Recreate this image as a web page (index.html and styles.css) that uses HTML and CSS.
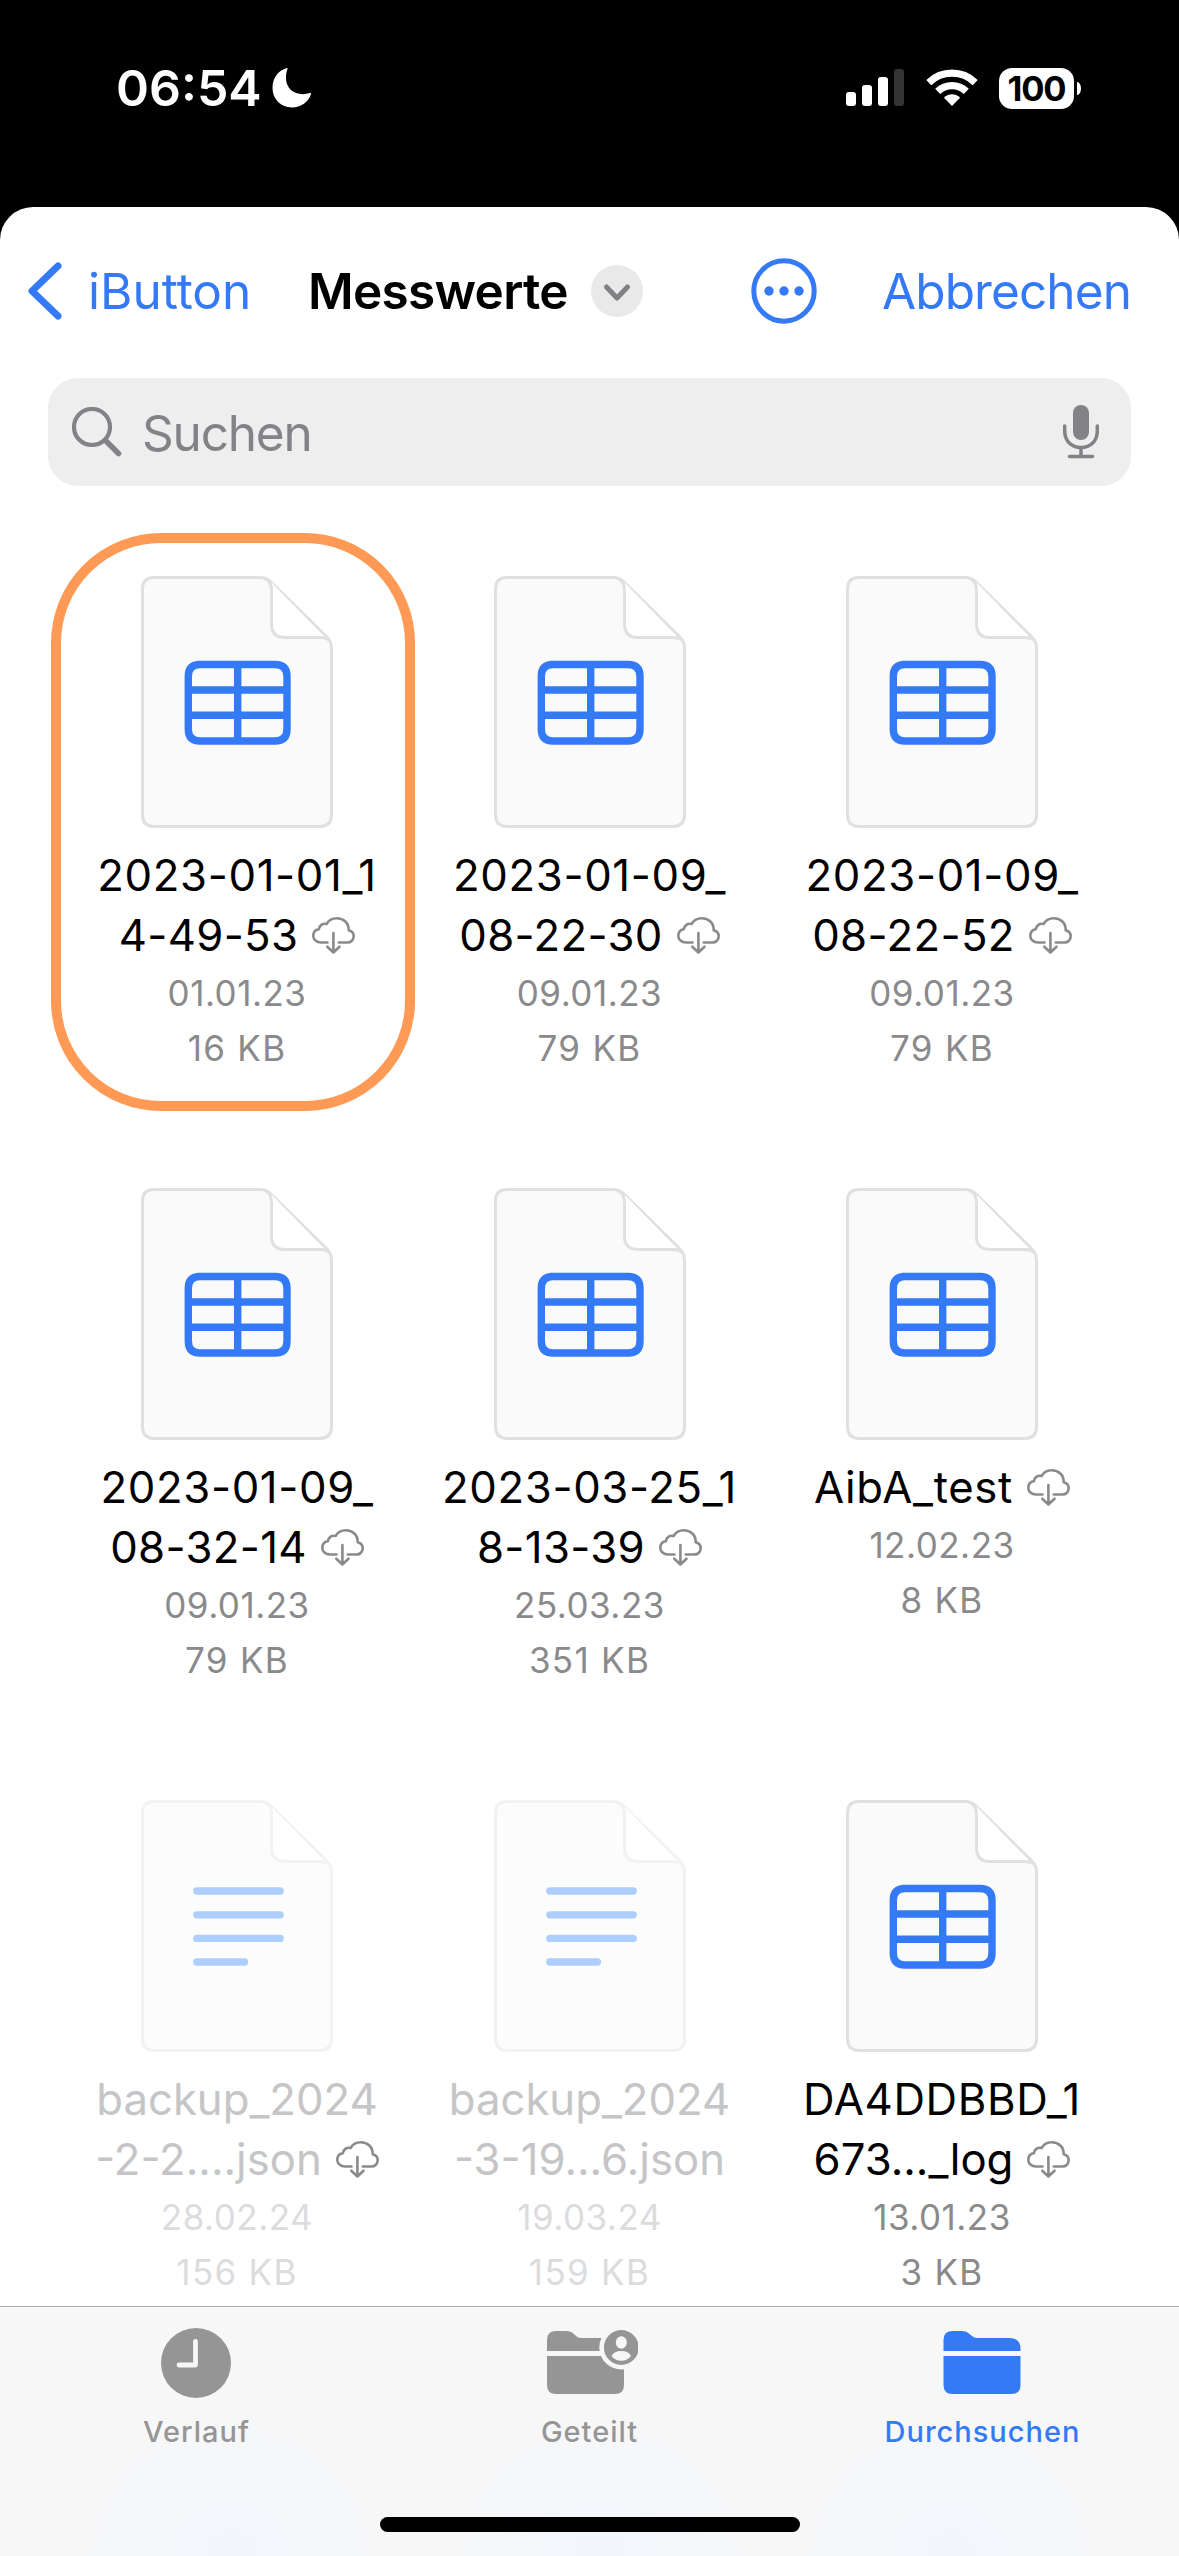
FILE: index.html
```html
<!DOCTYPE html>
<html lang="de">
<head>
<meta charset="utf-8">
<title>Messwerte</title>
<link rel="stylesheet" href="styles.css">
</head>
<body>
<svg class="sprite" aria-hidden="true">
  <symbol id="page" viewBox="0 0 192 252">
    <path class="page-body" d="M13 1.5H119Q125.500 1.500 130.500 6.500L185.500 60.500Q190.500 65 190.500 72V238.500Q190.500 250.500 179 250.500H13Q1.500 250.500 1.500 238.500V13Q1.500 1.500 13 1.500Z"/>
    <path class="page-fold" d="M130.500 6.500V48Q130.500 61.500 144 61.500H184Z"/>
    <path class="page-edge" d="M125 3Q130.500 6.500 130.500 14V48Q130.500 61.500 144 61.500H179Q186 61.500 188.500 65"/>
  </symbol>
  <symbol id="table" viewBox="0 0 192 252">
    <use href="#page"/>
    <path class="table-lines" d="M57 88.500H134Q146 88.500 146 100.500V153Q146 165 134 165H59Q47.300 165 47.300 153V100.500Q47.300 88.500 59 88.500ZM96.700 88.500V165M47.300 114H146M47.300 139.300H146"/>
  </symbol>
  <symbol id="text" viewBox="0 0 192 252">
    <use href="#page"/>
    <path class="text-lines" d="M55.800 91H139.200M55.800 114.800H139.200M55.800 138.400H139.200M55.800 162H103.500"/>
  </symbol>
  <symbol id="cloud" viewBox="0 0 43 38">
    <path d="M15.500 25.500H9C4.500 25.500 1.300 22.500 1.300 18.900C1.300 15.400 3.300 12.800 6.800 12.300C7.300 8.500 10.500 6 14.600 7C17 3 20.500 1.300 24.800 1.300C31.500 1.300 36.900 6 36.700 13.200C40 14 41.700 16.400 41.700 19.300C41.700 22.800 39 25.500 35.500 25.500H26.800M21.400 16V35.500M15.300 29.700L21.400 35.500L27.500 29.700"/>
  </symbol>
</svg>

<header class="status">
  <div class="clock">06:54
    <svg class="moon" viewBox="0 0 40 40"><path d="M15.500 0.800C16 .3 15.500 0 15 .1C6 2.500 .5 10.500 .5 20C.5 31 9 39.500 20 39.500C29 39.500 36.500 34 39 26C39.300 25.200 38.800 24.700 38 25C25 29 14.500 22 14 11C13.900 7 14.300 4 15.500 .8Z"/></svg>
  </div>
  <div class="indicators">
    <svg class="signal" viewBox="0 0 58 38"><rect x="0" y="23" width="10" height="14" rx="3"/><rect x="16" y="16" width="10" height="21" rx="3"/><rect x="32" y="8" width="10" height="29" rx="3"/><rect class="off" x="48" y="0" width="10" height="37" rx="3"/></svg>
    <svg class="wifi" viewBox="0 0 52 38"><path class="arc" d="M2.800 13.600A33.300 33.300 0 0 1 49.200 13.600M11.700 22.400A20.500 20.500 0 0 1 40.300 22.400"/><path class="dot" d="M26 37L18.500 29.200Q18 28.300 19 27.500Q26 22.800 33 27.500Q34 28.300 33.500 29.200Z"/></svg>
    <div class="battery"><span class="level">100</span><span class="nub"></span></div>
  </div>
</header>

<main class="sheet">
  <nav class="nav">
    <a class="back"><svg viewBox="0 0 34 58"><path d="M30 4L4 29L30 54"/></svg><span>iButton</span></a>
    <h1 class="title">Messwerte</h1>
    <svg class="disclose" viewBox="0 0 52 52"><circle cx="26" cy="26" r="26"/><path d="M15.500 22L26 33L36.500 22"/></svg>
    <svg class="more" viewBox="0 0 66 66"><circle class="ring" cx="33" cy="33" r="30.200"/><circle cx="18" cy="33" r="4.700"/><circle cx="33" cy="33" r="4.700"/><circle cx="48" cy="33" r="4.700"/></svg>
    <a class="cancel">Abbrechen</a>
  </nav>

  <div class="search">
    <svg class="lens" viewBox="0 0 50 50"><circle cx="20" cy="20" r="18"/><path d="M33.500 33.500L46.500 46.500"/></svg>
    <span class="placeholder">Suchen</span>
    <svg class="mic" viewBox="0 0 36 54"><rect class="head" x="10" y="0" width="16" height="35" rx="8"/><path d="M1.700 21V26C1.700 36 8.500 42.500 18 42.500S34.300 36 34.300 26V21M18 42.500V51.500M6.500 51.500H29.500"/></svg>
  </div>

  <section class="files">
    <article class="file marked">
      <svg class="doc"><use href="#table"/></svg>
      <div class="name"><span class="line wide">2023-01-01_1</span><span class="line">4-49-53<svg class="cloud"><use href="#cloud"/></svg></span></div>
      <div class="meta">01.01.23</div><div class="meta size">16 KB</div>
    </article>
    <article class="file">
      <svg class="doc"><use href="#table"/></svg>
      <div class="name"><span class="line wide">2023-01-09_</span><span class="line">08-22-30<svg class="cloud"><use href="#cloud"/></svg></span></div>
      <div class="meta">09.01.23</div><div class="meta size">79 KB</div>
    </article>
    <article class="file">
      <svg class="doc"><use href="#table"/></svg>
      <div class="name"><span class="line wide">2023-01-09_</span><span class="line">08-22-52<svg class="cloud"><use href="#cloud"/></svg></span></div>
      <div class="meta">09.01.23</div><div class="meta size">79 KB</div>
    </article>
    <article class="file">
      <svg class="doc"><use href="#table"/></svg>
      <div class="name"><span class="line wide">2023-01-09_</span><span class="line">08-32-14<svg class="cloud"><use href="#cloud"/></svg></span></div>
      <div class="meta">09.01.23</div><div class="meta size">79 KB</div>
    </article>
    <article class="file">
      <svg class="doc"><use href="#table"/></svg>
      <div class="name"><span class="line wide">2023-03-25_1</span><span class="line">8-13-39<svg class="cloud"><use href="#cloud"/></svg></span></div>
      <div class="meta">25.03.23</div><div class="meta size">351 KB</div>
    </article>
    <article class="file">
      <svg class="doc"><use href="#table"/></svg>
      <div class="name"><span class="line wide">AibA_test<svg class="cloud"><use href="#cloud"/></svg></span></div>
      <div class="meta">12.02.23</div><div class="meta size">8 KB</div>
    </article>
    <article class="file disabled">
      <svg class="doc"><use href="#text"/></svg>
      <div class="name"><span class="line word">backup_2024</span><span class="line word">-2-2....json<svg class="cloud"><use href="#cloud"/></svg></span></div>
      <div class="meta">28.02.24</div><div class="meta size">156 KB</div>
    </article>
    <article class="file disabled">
      <svg class="doc"><use href="#text"/></svg>
      <div class="name"><span class="line word">backup_2024</span><span class="line word">-3-19...6.json</span></div>
      <div class="meta">19.03.24</div><div class="meta size">159 KB</div>
    </article>
    <article class="file">
      <svg class="doc"><use href="#table"/></svg>
      <div class="name"><span class="line wide">DA4DDBBD_1</span><span class="line word">673..._log<svg class="cloud"><use href="#cloud"/></svg></span></div>
      <div class="meta">13.01.23</div><div class="meta size">3 KB</div>
    </article>
  </section>
</main>

<footer class="tabs">
  <div class="tab">
    <svg class="tab-icon" viewBox="1 0 96 70"><circle cx="48" cy="35" r="35"/><path class="hands" d="M47.500 13.500V37H31"/></svg>
    <span>Verlauf</span>
  </div>
  <div class="tab">
    <svg class="tab-icon" viewBox="0 0 96 70">
      <path d="M5 23V12Q5 3 14 3H25Q29 3 32 6L34 8Q36 10 39 10H70Q82 10 82 21V23ZM5 28H82V57Q82 66 73 66H14Q5 66 5 57Z"/>
      <circle class="cut" cx="79.300" cy="19.500" r="22"/>
      <circle cx="79.300" cy="19.500" r="17.400"/>
      <ellipse class="cut" cx="79.300" cy="14.500" rx="5.500" ry="6.200"/>
      <path class="cut" d="M69.500 28Q72 23 79.300 23T89 28Q85.500 32.800 79.300 32.800T69.500 28Z"/>
    </svg>
    <span>Geteilt</span>
  </div>
  <div class="tab active">
    <svg class="tab-icon" viewBox="1 0 96 70"><path d="M9.500 23V12Q9.500 3 18.500 3H28.500Q32.500 3 35.500 6L38 8Q40 10 43 10H75Q86.500 10 86.500 21V23ZM9.500 28H86.500V57Q86.500 66 77.500 66H18.500Q9.500 66 9.500 57Z"/></svg>
    <span>Durchsuchen</span>
  </div>
  <div class="home"></div>
</footer>
</body>
</html>
```
FILE: styles.css
```css
*, *::before { box-sizing: border-box; }

body {
  margin: 0;
  width: 1179px;
  height: 2556px;
  display: flex;
  flex-direction: column;
  overflow: hidden;
  background: #000;
  color: #000;
  font-family: Inter, "Liberation Sans", sans-serif;
}

svg { display: block; flex: none; fill: none; stroke-linecap: round; stroke-linejoin: round; }
.sprite { position: absolute; width: 0; height: 0; }

/* Status bar */
.status {
  height: 207px;
  flex: none;
  display: flex;
  justify-content: space-between;
  padding: 58px 98px 0 116px;
  color: #fff;
}
.clock {
  height: 60px;
  display: flex;
  align-items: center;
  gap: 10px;
  font-size: 50px;
  line-height: 60px;
  font-weight: 600;
}
.moon { width: 40px; height: 40px; fill: #fff; }
.indicators { height: 60px; display: flex; align-items: center; }
.signal { width: 58px; height: 38px; fill: #fff; }
.signal .off { fill: #333; }
.wifi { width: 52px; height: 38px; margin-left: 22px; }
.wifi .arc { stroke: #fff; stroke-width: 7.200; stroke-linecap: butt; }
.wifi .dot { fill: #fff; }
.battery { display: flex; align-items: center; gap: 3px; margin-left: 21px; }
.level {
  width: 75px;
  height: 41px;
  border-radius: 13px;
  background: #fff;
  color: #000;
  font-size: 34.500px;
  line-height: 41px;
  font-weight: 700;
  letter-spacing: -1.200px;
  text-align: center;
}
.nub { width: 4px; height: 13px; border-radius: 0 4px 4px 0 / 0 7px 7px 0; background: #fff; }

/* Sheet */
.sheet {
  height: 2099px;
  flex: none;
  overflow: hidden;
  background: #fff;
  border-radius: 33px 33px 0 0;
}
.nav {
  height: 171px;
  padding: 0 48px 3px 28px;
  display: flex;
  align-items: center;
  font-size: 49.500px;
  line-height: 60px;
  color: #347af6;
}
.back { display: flex; align-items: center; width: 280px; gap: 26px; }
.back svg { width: 34px; height: 58px; stroke: #347af6; stroke-width: 7; }
.title {
  margin: 0;
  width: 283px;
  color: #000;
  font-size: 49.500px;
  font-weight: 600;
  letter-spacing: -0.700px;
  white-space: nowrap;
}
.disclose { width: 52px; height: 52px; stroke: #808084; stroke-width: 5; }
.disclose circle { fill: #e9e9e9; stroke: none; }
.more { width: 66px; height: 66px; margin-left: 108px; fill: #347af6; }
.more .ring { fill: none; stroke: #347af6; stroke-width: 5; }
.cancel { margin-left: auto; letter-spacing: -0.900px; }

.search {
  height: 108px;
  margin: 0 48px;
  padding: 0 32px 0 24px;
  display: flex;
  align-items: center;
  border-radius: 30px;
  background: #eee;
  color: #838387;
}
.lens { width: 50px; height: 50px; stroke: #838387; stroke-width: 4.200; }
.lens path { stroke-width: 5.500; }
.placeholder {
  flex: 1;
  margin-left: 20px;
  padding-top: 2px;
  font-size: 49.500px;
  line-height: 60px;
  letter-spacing: -1.200px;
}
.mic { width: 36px; height: 54px; stroke: #838387; stroke-width: 3.500; }
.mic .head { fill: #838387; stroke: none; }

/* File grid */
.files {
  display: grid;
  grid-template-columns: repeat(3, 352.500px);
  grid-auto-rows: 612px;
  justify-content: center;
  padding-top: 90px;
}
.file { position: relative; display: flex; flex-direction: column; align-items: center; }
.marked::before {
  content: "";
  position: absolute;
  left: -10px;
  top: -43px;
  width: 364px;
  height: 578px;
  border: 10.500px solid #ff9a56;
  border-radius: 110px;
}
.doc { width: 192px; height: 252px; }
.page-body { fill: #fafafa; stroke: #e0e0e0; stroke-width: 3; }
.page-fold { fill: #fff; }
.page-edge { stroke: #e0e0e0; stroke-width: 3; }
.table-lines { stroke: #347af6; stroke-width: 7.400; }
.text-lines { stroke: #3487ff; stroke-width: 7.300; }
.name { margin-top: 18px; font-size: 43.700px; line-height: 60px; letter-spacing: 0.350px; }
.line { height: 60px; display: flex; justify-content: center; align-items: center; white-space: nowrap; }
.wide { letter-spacing: 0.650px; }
.word { letter-spacing: 0; }
.cloud { width: 43px; height: 38px; margin-left: 14px; stroke: #8a8a8c; stroke-width: 2.600; }
.meta { font-size: 35px; line-height: 55px; letter-spacing: 0.500px; color: #8a8a8c; }
.size { letter-spacing: 1.300px; }

.disabled .doc { opacity: .4; }
.disabled .name { color: #c5c5c7; }
.disabled .meta { color: #dcdcde; }

/* Tab bar */
.tabs {
  position: relative;
  height: 250px;
  flex: none;
  display: grid;
  grid-template-columns: repeat(3, 393px);
  border-top: 1px solid #aaa;
  background:
    radial-gradient(ellipse 170px 160px at 230px 250px, #f2f6fc, #f2f6fc00),
    radial-gradient(ellipse 170px 160px at 600px 250px, #f2f6fc, #f2f6fc00),
    radial-gradient(ellipse 170px 160px at 950px 250px, #f2f6fc, #f2f6fc00),
    #f7f7f7;
}
.tab {
  display: flex;
  flex-direction: column;
  align-items: center;
  padding-top: 21px;
  color: #959595;
  font-size: 29px;
  line-height: 36px;
  font-weight: 500;
  letter-spacing: 1px;
}
.tab span { margin-top: 16px; }
.tab-icon { width: 96px; height: 70px; fill: currentColor; }
.hands { fill: none; stroke: #f7f7f7; stroke-width: 4.800; }
.cut { fill: #f7f7f7; }
.active { color: #347af6; }
.home {
  position: absolute;
  left: 380px;
  top: 210px;
  width: 420px;
  height: 15px;
  border-radius: 8px;
  background: #000;
}
```
